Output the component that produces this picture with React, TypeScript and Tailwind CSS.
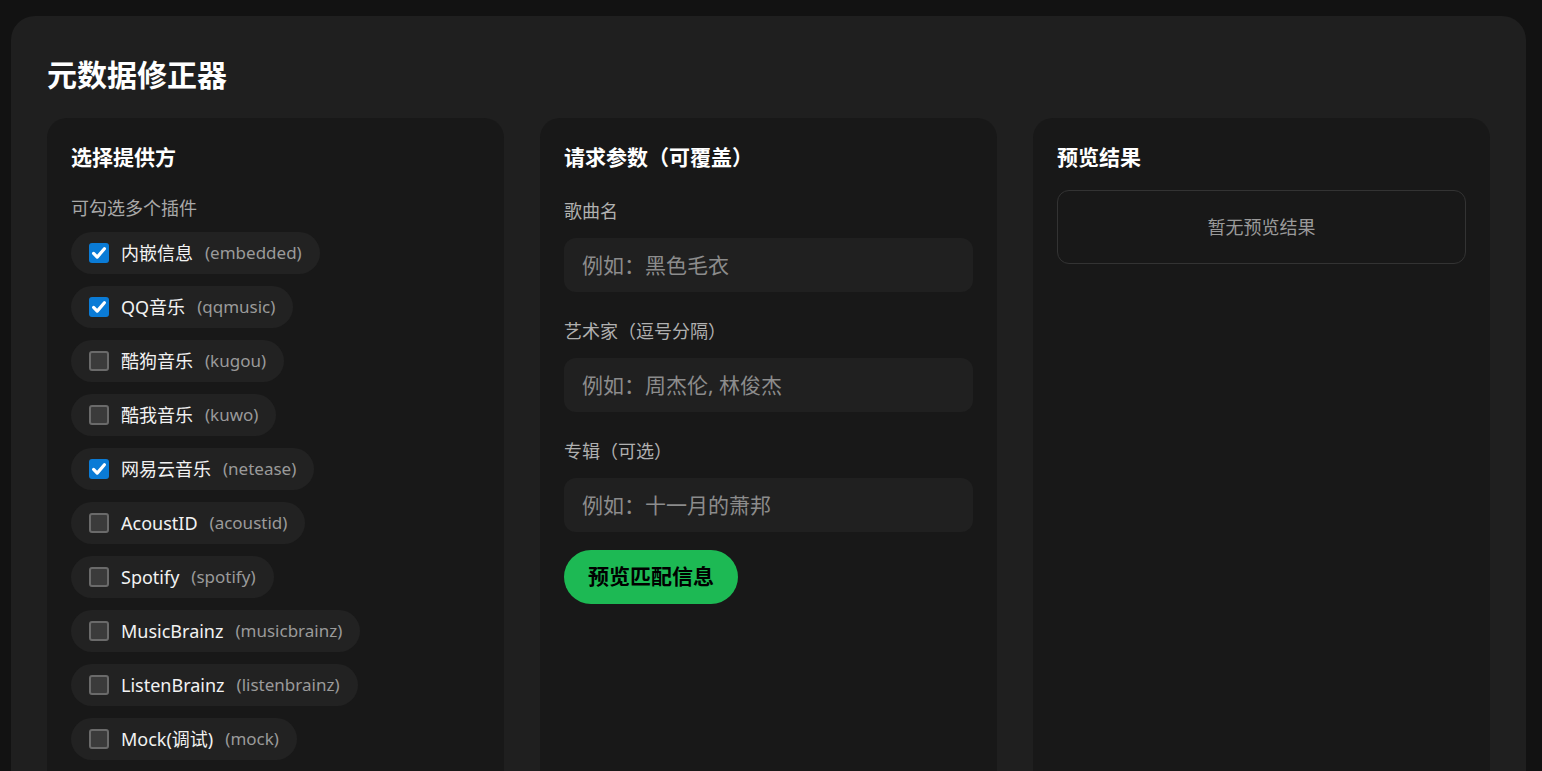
import React from 'react';

type Provider = {
  name: string;
  id: string;
  checked: boolean;
};

const providers: Provider[] = [
  { name: '内嵌信息', id: 'embedded', checked: true },
  { name: 'QQ音乐', id: 'qqmusic', checked: true },
  { name: '酷狗音乐', id: 'kugou', checked: false },
  { name: '酷我音乐', id: 'kuwo', checked: false },
  { name: '网易云音乐', id: 'netease', checked: true },
  { name: 'AcoustID', id: 'acoustid', checked: false },
  { name: 'Spotify', id: 'spotify', checked: false },
  { name: 'MusicBrainz', id: 'musicbrainz', checked: false },
  { name: 'ListenBrainz', id: 'listenbrainz', checked: false },
  { name: 'Mock(调试)', id: 'mock', checked: false },
];

const fields = [
  { label: '歌曲名', placeholder: '例如：黑色毛衣' },
  { label: '艺术家（逗号分隔）', placeholder: '例如：周杰伦, 林俊杰' },
  { label: '专辑（可选）', placeholder: '例如：十一月的萧邦' },
];

const Checkbox: React.FC<{ checked: boolean }> = ({ checked }) =>
  checked ? (
    <span className="flex h-5 w-5 items-center justify-center rounded-[3px] bg-[#0a7bd6]">
      <svg viewBox="0 0 20 20" className="h-5 w-5" fill="none">
        <path
          d="M4.6 10.4l3.6 3.7 7.2-8.4"
          stroke="#fff"
          strokeWidth="3.2"
          strokeLinecap="round"
          strokeLinejoin="round"
        />
      </svg>
    </span>
  ) : (
    <span className="h-5 w-5 rounded-[3px] border-2 border-[#6a6a6a] bg-[#3b3b3b]" />
  );

/**
 * 元数据修正器
 */
const App: React.FC = () => {
  return (
    <div
      className="min-h-screen bg-[#121212] pt-4 pl-[11px] pr-4 text-white"
      style={{ fontFamily: '"Segoe UI", "Noto Sans", "Noto Sans CJK SC", sans-serif' }}
    >
      <div className="rounded-t-[24px] bg-[#1f1f1f] px-9 pt-9">
        <h1 className="text-[30px] font-bold leading-[45px] text-white">元数据修正器</h1>

        <div className="mt-[21px] grid grid-cols-3 gap-9">
          {/* providers */}
          <section className="rounded-t-[20px] bg-[#181818] px-6 pt-6 pb-6">
            <h2 className="text-[21px] font-bold leading-[30px]">选择提供方</h2>
            <p className="mt-[23px] text-[18px] leading-[27px] text-[#a8a8a8]">可勾选多个插件</p>
            <div className="mt-[10px] flex flex-col items-start gap-3">
              {providers.map((p) => (
                <label
                  key={p.id}
                  className="flex h-[42px] items-center gap-3 rounded-full bg-[#222222] px-[18px]"
                >
                  <Checkbox checked={p.checked} />
                  <span className="text-[18px] text-[#f2f2f2]">{p.name}</span>
                  <span className="text-[17px] text-[#9a9a9a]">({p.id})</span>
                </label>
              ))}
            </div>
          </section>

          {/* request params */}
          <section className="rounded-t-[20px] bg-[#181818] px-6 pt-6 pb-6">
            <h2 className="text-[21px] font-bold leading-[30px]">请求参数（可覆盖）</h2>
            <div className="mt-[26px] flex flex-col gap-[26px]">
              {fields.map((f) => (
                <div key={f.label} className="flex flex-col">
                  <span className="text-[18px] leading-[27px] text-[#b0b0b0]">{f.label}</span>
                  <input
                    className="mt-[13px] h-[54px] rounded-xl bg-[#202020] px-[18px] text-[21px] text-white outline-none placeholder:text-[#8c8c8c]"
                    placeholder={f.placeholder}
                  />
                </div>
              ))}
            </div>
            <button className="mt-[18px] h-[54px] rounded-full bg-[#1db954] px-6 text-[21px] font-bold text-black">
              预览匹配信息
            </button>
          </section>

          {/* preview */}
          <section className="min-h-[680px] rounded-t-[20px] bg-[#181818] px-6 pt-6 pb-6">
            <h2 className="text-[21px] font-bold leading-[30px]">预览结果</h2>
            <div className="mt-[18px] flex h-[74px] items-center justify-center rounded-xl border border-[#333333] text-[18px] text-[#9a9a9a]">
              暂无预览结果
            </div>
          </section>
        </div>
      </div>
    </div>
  );
};

export default App;
